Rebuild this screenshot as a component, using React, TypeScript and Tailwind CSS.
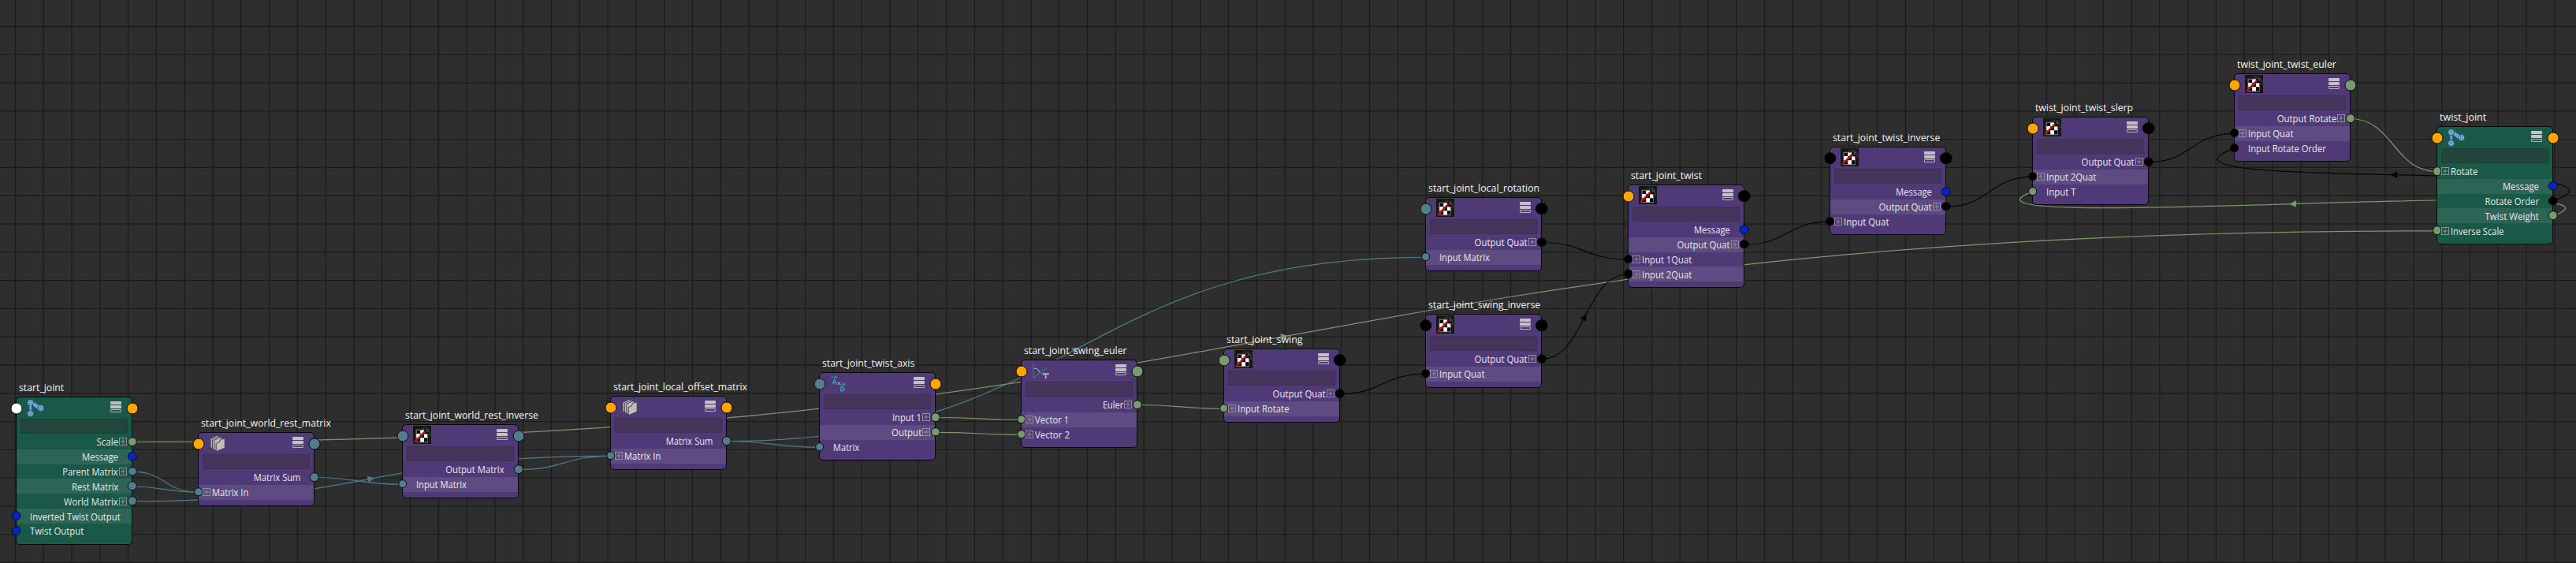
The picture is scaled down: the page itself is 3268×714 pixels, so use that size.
import { useLayoutEffect, useRef } from "react";

type Port = "white" | "orange" | "teal" | "green" | "blue" | "black";
type IconName = "joint" | "stack" | "checker" | "cross" | "angle";
type Row = { side: "in" | "out"; label: string; w: number; port: Port; expand?: boolean };
type NodeData = {
  x: number;
  y: number;
  title: string;
  tw: number;
  icon: IconName;
  green?: boolean;
  left: Port;
  right: Port;
  rows: Row[];
};

const ROW_H = 18.83;
const NODE_W = 148;

const out = (label: string, w: number, port: Port, expand = false): Row => ({ side: "out", label, w, port, expand });
const inp = (label: string, w: number, port: Port, expand = false): Row => ({ side: "in", label, w, port, expand });

const NODES: NodeData[] = [
  {
    x: 20, y: 503, title: "start_joint", tw: 56.5, icon: "joint", green: true, left: "white", right: "orange",
    rows: [
      out("Scale", 26.5, "green", true),
      out("Message", 45, "blue"),
      out("Parent Matrix", 69.7, "teal", true),
      out("Rest Matrix", 58, "teal"),
      out("World Matrix", 68, "teal", true),
      inp("Inverted Twist Output", 113.7, "blue"),
      inp("Twist Output", 67.3, "blue"),
    ],
  },
  { x: 251, y: 548, title: "start_joint_world_rest_matrix", tw: 163.3, icon: "stack", left: "orange", right: "teal", rows: [out("Matrix Sum", 58.3, "teal"), inp("Matrix In", 45.3, "teal", true)] },
  { x: 510, y: 538, title: "start_joint_world_rest_inverse", tw: 167.7, icon: "checker", left: "teal", right: "teal", rows: [out("Output Matrix", 73.7, "teal"), inp("Input Matrix", 63.3, "teal")] },
  { x: 774, y: 502, title: "start_joint_local_offset_matrix", tw: 168.7, icon: "stack", left: "orange", right: "orange", rows: [out("Matrix Sum", 58.3, "teal"), inp("Matrix In", 45.3, "teal", true)] },
  { x: 1039, y: 472, title: "start_joint_twist_axis", tw: 116, icon: "cross", left: "teal", right: "orange", rows: [out("Input 1", 36, "green", true), out("Output", 37, "green", true), inp("Matrix", 32.3, "teal")] },
  { x: 1295, y: 456, title: "start_joint_swing_euler", tw: 129.7, icon: "angle", left: "orange", right: "green", rows: [out("Euler", 25, "green", true), inp("Vector 1", 42.3, "green", true), inp("Vector 2", 43, "green", true)] },
  { x: 1552, y: 442, title: "start_joint_swing", tw: 95, icon: "checker", left: "green", right: "black", rows: [out("Output Quat", 66.3, "black", true), inp("Input Rotate", 64.3, "green", true)] },
  { x: 1808, y: 398, title: "start_joint_swing_inverse", tw: 141.3, icon: "checker", left: "black", right: "black", rows: [out("Output Quat", 66.3, "black", true), inp("Input Quat", 56, "black", true)] },
  { x: 1808, y: 250, title: "start_joint_local_rotation", tw: 140.3, icon: "checker", left: "teal", right: "black", rows: [out("Output Quat", 66.3, "black", true), inp("Input Matrix", 63.3, "teal")] },
  { x: 2065, y: 234, title: "start_joint_twist", tw: 89.3, icon: "checker", left: "orange", right: "black", rows: [out("Message", 45, "blue"), out("Output Quat", 66.3, "black", true), inp("Input 1Quat", 62.3, "black", true), inp("Input 2Quat", 62.3, "black", true)] },
  { x: 2321, y: 186, title: "start_joint_twist_inverse", tw: 135.3, icon: "checker", left: "black", right: "black", rows: [out("Message", 45, "blue"), out("Output Quat", 66.3, "black", true), inp("Input Quat", 56, "black", true)] },
  { x: 2578, y: 148, title: "twist_joint_twist_slerp", tw: 123.3, icon: "checker", left: "orange", right: "black", rows: [out("Output Quat", 66.3, "black", true), inp("Input 2Quat", 62.3, "black", true), inp("Input T", 36.7, "green")] },
  { x: 2834, y: 93, title: "twist_joint_twist_euler", tw: 124.9, icon: "checker", left: "orange", right: "green", rows: [out("Output Rotate", 74.3, "green", true), inp("Input Quat", 56, "black", true), inp("Input Rotate Order", 98.2, "black")] },
  {
    x: 3091, y: 160, title: "twist_joint", tw: 57.7, icon: "joint", green: true, left: "orange", right: "orange",
    rows: [
      inp("Rotate", 33.7, "green", true),
      out("Message", 45, "blue"),
      out("Rotate Order", 67.5, "black"),
      out("Twist Weight", 67.5, "green"),
      inp("Inverse Scale", 66.7, "green", true),
    ],
  },
];

const TEAL = "#4f7b8b";
const GREEN = "#7a996b";
const BLACK = "#060606";

// [from node, from row, to node, to row, colour, arrow at midpoint]
const WIRES: [number, number, number, number, string, boolean][] = [
  [0, 0, 13, 4, GREEN, true],
  [0, 2, 1, 1, TEAL, false],
  [0, 3, 1, 1, TEAL, false],
  [0, 4, 3, 1, TEAL, true],
  [1, 0, 2, 1, TEAL, false],
  [2, 0, 3, 1, TEAL, false],
  [3, 0, 4, 2, TEAL, false],
  [3, 0, 8, 1, TEAL, true],
  [4, 0, 5, 1, GREEN, false],
  [4, 1, 5, 2, GREEN, false],
  [5, 0, 6, 1, GREEN, false],
  [6, 0, 7, 1, BLACK, false],
  [8, 0, 9, 2, BLACK, false],
  [7, 0, 9, 3, BLACK, true],
  [9, 1, 10, 2, BLACK, false],
  [10, 1, 11, 1, BLACK, false],
  [11, 0, 12, 1, BLACK, false],
  [12, 0, 13, 0, GREEN, false],
  [13, 2, 12, 2, BLACK, true],
  [13, 3, 11, 2, GREEN, true],
];

const portY = (n: number, r: number) => NODES[n].y + 57.5 + ROW_H * r;

function Wire({ w }: { w: (typeof WIRES)[number] }) {
  const [a, ra, b, rb, color, arrow] = w;
  const x0 = NODES[a].x + 147.5;
  const y0 = portY(a, ra);
  const x1 = NODES[b].x + 0.5;
  const y1 = portY(b, rb);
  const back = x1 < x0;
  const c = back ? 150 : (x1 - x0) / 2;
  const d = back ? 55 : 0;
  const p1 = [x0 + c, y0 - d];
  const p2 = [x1 - c, y1 + d];
  const mx = (x0 + 3 * p1[0] + 3 * p2[0] + x1) / 8;
  const my = (y0 + 3 * p1[1] + 3 * p2[1] + y1) / 8;
  const ang = (Math.atan2(y1 + p2[1] - p1[1] - y0, x1 + p2[0] - p1[0] - x0) * 180) / Math.PI;
  return (
    <g>
      <path d={`M${x0} ${y0} C${p1[0]} ${p1[1]} ${p2[0]} ${p2[1]} ${x1} ${y1}`} fill="none" stroke={color} strokeWidth="1.2" />
      {arrow && <path d="M-4.5 -4.2 L4.5 0 L-4.5 4.2Z" fill={color} transform={`translate(${mx} ${my}) rotate(${ang})`} />}
    </g>
  );
}

function FitText({ text, width, right }: { text: string; width: number; right?: boolean }) {
  const ref = useRef<HTMLSpanElement>(null);
  useLayoutEffect(() => {
    const el = ref.current;
    if (el && el.offsetWidth) el.style.transform = `scaleX(${width / (el.offsetWidth - 1.2)})`;
  }, [width]);
  return (
    <span ref={ref} className={`inline-block shrink-0 whitespace-nowrap ${right ? "origin-right" : "origin-left"}`}>
      {text}
    </span>
  );
}

const PORT_BG: Record<Port, string> = {
  white: "bg-white",
  orange: "bg-[#ffa500]",
  teal: "bg-[#517d8c]",
  green: "bg-[#7a9a6c]",
  blue: "bg-[#0824c6]",
  black: "bg-black",
};

function Dot({ port, side, big }: { port: Port; side: "in" | "out"; big?: boolean }) {
  const size = big ? (port === "black" ? "size-[15.5px]" : "size-[15px]") : "size-[11.6px]";
  const pos = side === "in" ? "left-[-0.5px] -translate-x-1/2" : "right-[-0.5px] translate-x-1/2";
  const top = big ? "top-[13.6px]" : "top-[9px]";
  return <span className={`absolute ${top} ${pos} ${size} ${PORT_BG[port]} -translate-y-1/2 rounded-full border-[1.3px] border-[#080a0c]`} />;
}

function Plus() {
  return (
    <svg width="10" height="10" viewBox="0 0 10 10" className="shrink-0" fill="none" stroke="#908e97" strokeWidth="1">
      <rect x="0.5" y="0.5" width="9" height="9" />
      <path d="M5 2v6M2 5h6" />
    </svg>
  );
}

function NodeIcon({ name }: { name: IconName }) {
  if (name === "joint")
    return (
      <svg width="23" height="23" viewBox="0 0 23 23" className="ml-[13px] mt-[2px]">
        <path d="M2.7 6L6.8 6L6.2 18L3.4 18Z M7 2.6L18.5 9.5L15 14.5L5 6.5Z" fill="#6ba4dc" stroke="#24506f" strokeWidth=".8" />
        {[[4.6, 4.6], [4.6, 18.6], [17.8, 11.5]].map(([x, y]) => (
          <g key={`${x}-${y}`}>
            <circle cx={x} cy={y} r="3.9" fill="#7bb2e4" stroke="#24506f" strokeWidth=".9" />
            <circle cx={x} cy={y} r="1.3" fill="#dce8f0" stroke="#24506f" strokeWidth=".9" />
          </g>
        ))}
      </svg>
    );
  if (name === "stack")
    return (
      <svg width="23" height="23" viewBox="0 0 23 23" className="ml-[13px] mt-[2px]" fill="#bdbdbd" stroke="#3c3548" strokeWidth=".9">
        <path d="M2 5.3L10.6 1.2L11.7 1.6V14.6L2 17.5Z" />
        <path d="M4.4 6.2L13 2.4L14 2.8V15.6L4.4 19.2Z" />
        <path d="M6.8 7.2L15.4 3.6L16.6 4.2V16.9L6.8 20.6Z" />
        <path d="M9.2 11.5L13.4 9.6L14.4 6.8L19.2 5L20.2 5.6V17.2L9.2 21.8Z" />
      </svg>
    );
  if (name === "checker")
    return (
      <svg width="23" height="23" viewBox="0 0 23 23" className="ml-[13px] mt-[1px]">
        <rect width="23" height="23" fill="#161616" />
        <rect x="4" y="5.2" width="14.6" height="15.6" fill="#fff" stroke="#8a8a8a" strokeWidth=".8" />
        <g fill="#0a0a0a">
          <rect x="4.4" y="5.6" width="4.8" height="4.4" />
          <rect x="9.2" y="10" width="4.8" height="5.2" />
          <rect x="4.4" y="15.2" width="4.8" height="5.2" />
          <rect x="14" y="15.2" width="4.4" height="5.2" />
          <rect x="14" y="5" width="5" height="5.4" />
        </g>
        <path d="M10.6 5C12 2 16 1.5 18.5 4C20.5 6 22 8 21.3 11L18.4 13" fill="none" stroke="#343434" strokeWidth="2.2" strokeDasharray="2.4 .8" />
        <circle cx="18" cy="6.2" r="1.5" fill="#4c4c4c" />
        <path d="M2.4 20.6L14.6 7.8" stroke="#7e0f0c" strokeWidth="2.6" strokeLinecap="round" />
        <path d="M2.6 20L14.6 7.4" stroke="#cf1812" strokeWidth="1.4" strokeLinecap="round" />
      </svg>
    );
  if (name === "cross")
    return (
      <svg width="23" height="23" viewBox="0 0 23 23" className="ml-[12px] mt-[1px]" fill="none" stroke="#36a5a8">
        <path d="M2.8 4.3H9M7.4 2.7L9.8 4.3L7.4 5.9" strokeWidth=".9" />
        <path d="M4 13.6L6.7 7L9.4 13.6M5 11.6H8.4" strokeWidth="1.2" />
        <path d="M10.6 10.6L13.8 14M13.8 10.6L10.6 14" stroke="#b5b5b5" strokeWidth="1" />
        <path d="M13.8 13.2H19.8M18 11.6L20.4 13.2L18 14.8" strokeWidth=".9" />
        <path d="M14.8 16.3V21.8H17.4C19.8 21.8 19.8 19 17.6 19H14.8H17.2C19.2 19 19.2 16.3 17.2 16.3Z" strokeWidth="1.2" />
      </svg>
    );
  return (
    <svg width="23" height="23" viewBox="0 0 23 23" className="ml-[12px] mt-[1px]" fill="none">
      <path d="M3.2 2.7V21.2L21 8" stroke="#2c7c84" strokeWidth="1.2" />
      <path d="M3.6 9.4C7 8.6 10 10.6 10.8 14.6" stroke="#b9b9c0" strokeWidth="1" />
      <path d="M15.4 17.6V16H21.8V17.6M18.6 16V22.6" stroke="#b9b9b9" strokeWidth="1.6" />
    </svg>
  );
}

function MenuIcon() {
  return (
    <div className="mr-[13px] mt-[5px] flex w-[14px] flex-col gap-px">
      <div className="h-[4px] rounded-[1px] bg-[#c3c1c4]" />
      <div className="h-[4px] rounded-[1px] bg-[#c3c1c4]" />
      <div className="h-[4px] rounded-[1px] border border-[#b8b6ba]" />
    </div>
  );
}

function GraphNode({ n }: { n: NodeData }) {
  const body = n.green ? "bg-[#1a5947]" : "bg-[#4f3a77]";
  const stripe = n.green ? "bg-[#2c6555]" : "bg-[#5e4b82]";
  const field = n.green ? "border-[#1c3e34] bg-[#22463b]" : "border-[#3d2f58] bg-[#45355c]";
  return (
    <div className="absolute" style={{ left: n.x, top: n.y, width: NODE_W }}>
      <div className="absolute bottom-full left-[4px] mb-[3px] text-[13.2px] leading-[18px] text-[#f4f4f4]">
        <FitText text={n.title} width={n.tw} />
      </div>
      <div className={`rounded-[5px] border border-[#07080a] pb-[7px] ${body}`}>
        <div className="relative flex h-[27px] items-start justify-between">
          <NodeIcon name={n.icon} />
          <MenuIcon />
          <Dot port={n.left} side="in" big />
          <Dot port={n.right} side="out" big />
        </div>
        <div className={`mx-[5px] mb-px h-[19px] border ${field}`} />
        {n.rows.map((r, i) => (
          <div
            key={r.label}
            className={`relative flex h-[18.83px] items-center text-[13px] leading-[18px] text-[#e9e7ec] ${i % 2 ? stripe : ""} ${r.side === "out" ? "justify-end" : "justify-start"}`}
          >
            {r.side === "in" ? (
              <>
                <span className="ml-[5px] flex w-[12px] shrink-0">{r.expand && <Plus />}</span>
                <FitText text={r.label} width={r.w} />
              </>
            ) : (
              <>
                <FitText text={r.label} width={r.w} right />
                <span className="mr-[6px] flex w-[11px] shrink-0 justify-end">{r.expand && <Plus />}</span>
              </>
            )}
            <Dot port={r.port} side={r.side} />
          </div>
        ))}
      </div>
    </div>
  );
}

export default function App() {
  return (
    <div className="relative h-[714px] w-[3268px] overflow-hidden bg-[#2e2e2e] font-['Open_Sans','Noto_Sans',sans-serif]">
      <svg width="3268" height="714" viewBox="0 0 3268 714" className="absolute inset-0">
        <g stroke="#1c1c1c" strokeWidth="1.3">
          {Array.from({ length: 91 }, (_, i) => (
            <path key={i} d={`M${19.4 + i * 35.794} 0V714`} />
          ))}
          {Array.from({ length: 20 }, (_, i) => (
            <path key={i} d={`M0 ${33.5 + i * 35.79}H3268`} />
          ))}
        </g>
        {WIRES.map((w, i) => (
          <Wire key={i} w={w} />
        ))}
      </svg>
      {NODES.map((n) => (
        <GraphNode key={n.title} n={n} />
      ))}
    </div>
  );
}
